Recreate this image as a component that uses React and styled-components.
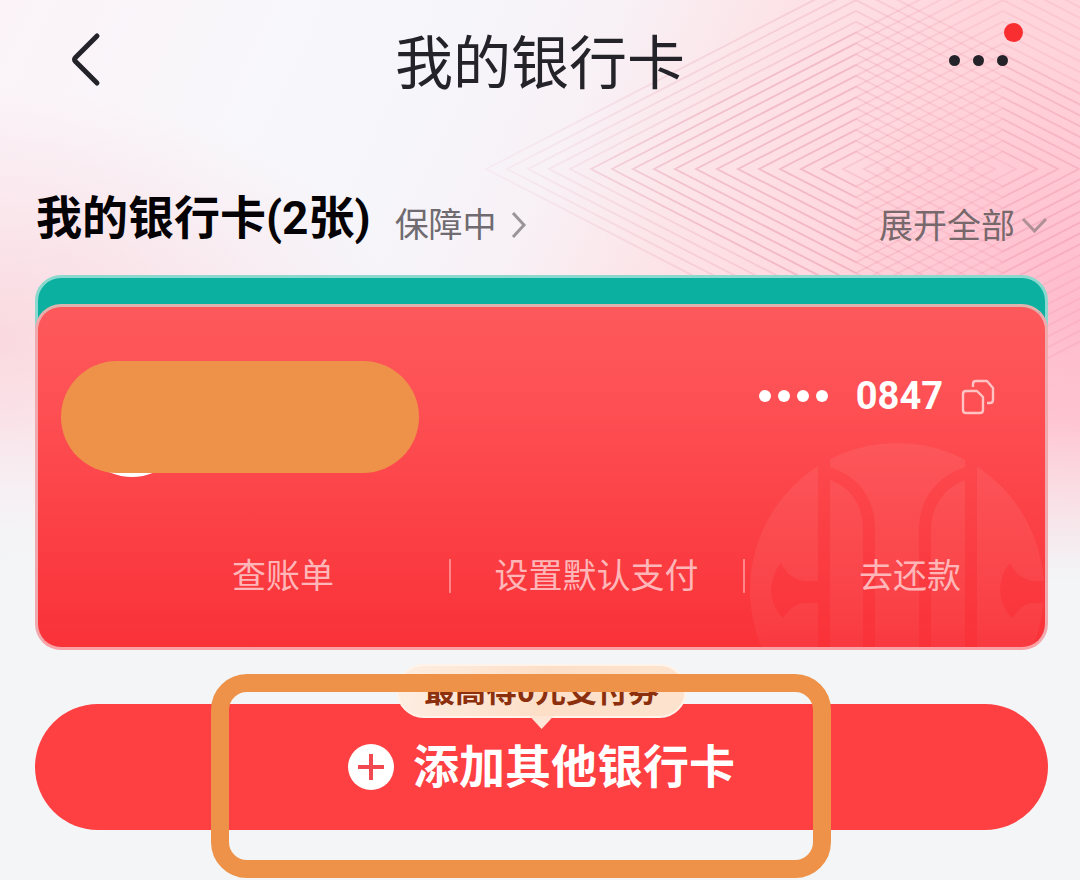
import styled, { createGlobalStyle } from 'styled-components'

const GlobalStyle = createGlobalStyle`
  * {
    box-sizing: border-box;
  }

  body {
    margin: 0;
    background: #f3f5f7;
    font-family: Roboto, 'Noto Sans CJK SC', sans-serif;
  }

  button {
    margin: 0;
    padding: 0;
    border: 0;
    background: none;
    color: inherit;
    font: inherit;
    cursor: pointer;
  }

  svg {
    display: block;
    flex-shrink: 0;
  }
`

const Page = styled.div`
  position: relative;
  min-height: 100vh;
  overflow: hidden;
  background:
    linear-gradient(180deg, rgba(243, 245, 247, 0) 420px, #f3f5f7 580px),
    radial-gradient(ellipse 400px 250px at 0 340px, rgba(250, 212, 219, 0.85), rgba(250, 212, 219, 0)),
    radial-gradient(ellipse 260px 260px at 100% 310px, rgba(255, 168, 192, 0.55), rgba(255, 168, 192, 0)),
    linear-gradient(115deg, #fbf3f8 0, #f8f7fb 20%, #f6f5fa 32%, #f8f1f6 42%, #fce4e8 52%, #ffd5dc 66%, #ffced7 100%);
`

const Backdrop = styled.svg`
  position: absolute;
  top: 0;
  right: 0;
`

const Content = styled.div`
  position: relative;
`

const Header = styled.header`
  display: grid;
  grid-template-columns: 1fr auto 1fr;
  align-items: center;
  height: 120px;
  padding: 0 66px;
`

const Title = styled.h1`
  margin: 0;
  padding-top: 8px;
  color: #25232a;
  font-size: 58px;
  font-weight: 400;
  line-height: 112px;
`

const BackButton = styled.button`
  justify-self: start;
`

const MoreButton = styled.button`
  position: relative;
  justify-self: end;
  display: flex;
  gap: 13px;
  padding: 24px 6px;
  color: #25232a;
`

const Dot = styled.span`
  width: ${({ $size }) => $size}px;
  height: ${({ $size }) => $size}px;
  border-radius: 50%;
  background: currentColor;
`

const Badge = styled.span`
  position: absolute;
  top: -8px;
  right: -9px;
  width: 19px;
  height: 19px;
  border-radius: 50%;
  background: #f92e30;
`

const Main = styled.main`
  padding: 0 32px 0 35px;
`

const SectionHead = styled.div`
  display: flex;
  align-items: center;
  height: 155px;
  padding: 40px 0 0 1px;
`

const SectionTitle = styled.h2`
  margin: 0 24px 0 0;
  color: #050305;
  font-size: 46px;
  font-weight: 700;
  line-height: 60px;
`

const SafeLink = styled.a`
  display: flex;
  align-items: center;
  gap: 14px;
  padding-top: 15px;
  color: #6f6b70;
  font-size: 34px;
  line-height: 40px;
  text-decoration: none;
`

const ExpandButton = styled.button`
  display: flex;
  align-items: center;
  gap: 6px;
  margin-left: auto;
  padding-top: 17px;
  color: #77686b;
  font-size: 34px;
  line-height: 40px;
`

const BackCard = styled.div`
  height: 64px;
  border: 3px solid #8bd8ce;
  border-radius: 26px 26px 0 0;
  background: #0cb0a0;
`

const Card = styled.article`
  position: relative;
  margin-top: -35px;
  overflow: hidden;
  border: 3px solid #f0a9ad;
  border-top-color: #dfb4ae;
  border-bottom-color: #f9a2a7;
  border-radius: 26px;
  background: linear-gradient(180deg, #fd595c, #fe5054 28%, #fb4146 62%, #f93238);
`

const Watermark = styled.svg`
  position: absolute;
  right: 0;
  bottom: 0;
`

const CardTop = styled.div`
  position: relative;
  display: flex;
  align-items: flex-start;
  justify-content: space-between;
  padding: 54px 50px 0 23px;
`

const BankName = styled.div`
  position: relative;
  width: 358px;
  height: 112px;
  border-radius: 56px;
  background: #ed9248;
`

const BankLogo = styled.span`
  position: absolute;
  left: 15px;
  bottom: -4px;
  z-index: -1;
  width: 112px;
  height: 112px;
  border-radius: 50%;
  background: #fff;
`

const BankSlot = styled.div`
  position: relative;
  z-index: 0;
`

const CardNumber = styled.div`
  display: flex;
  align-items: center;
  padding-top: 13px;
  color: #fff;
  font-size: 38px;
  font-weight: 700;
  line-height: 44px;
`

const Mask = styled.span`
  display: flex;
  gap: 7px;
  margin-right: 28px;
`

const CopyButton = styled.button`
  margin-left: 16px;
  color: #ffc3c3;
`

const Actions = styled.div`
  position: relative;
  display: flex;
  justify-content: space-between;
  padding: 86px 84px 54px 194px;
`

const Action = styled.button`
  color: #ffb6b8;
  font-size: 34px;
  line-height: 34px;
`

const MiddleAction = styled(Action)`
  padding: 0 44px;
  border: solid rgba(255, 196, 196, 0.55);
  border-width: 0 2px;
`

const AddArea = styled.section`
  position: relative;
  padding: 54px 0 49px;
`

const AddButton = styled.button`
  display: flex;
  align-items: center;
  justify-content: center;
  gap: 19px;
  width: 100%;
  height: 126px;
  border-radius: 63px;
  background: #ff4042;
  color: #fff;
  font-size: 46px;
  font-weight: 700;
  line-height: 60px;
`

const Tip = styled.div`
  position: absolute;
  top: 14px;
  left: 50%;
  transform: translateX(-50%);
  padding: 3px 26px 1px;
  border: 2px solid #fff3ea;
  border-radius: 27px;
  background: linear-gradient(100deg, #fdeee2, #fddfc8 50%, #fde3ce);
  color: #8c2f0c;
  font-size: 31px;
  font-weight: 700;
  line-height: 46px;
  white-space: nowrap;

  &::after {
    content: '';
    position: absolute;
    top: 100%;
    left: 50%;
    margin-left: -12px;
    border: solid transparent;
    border-width: 13px 12px 0;
    border-top-color: #fde6d6;
  }
`

const Highlight = styled.div`
  position: absolute;
  top: 24px;
  right: 217px;
  bottom: 1px;
  left: 176px;
  border: 18px solid #ed9248;
  border-radius: 36px;
  pointer-events: none;
`

const STEP = 21
const LEFT_RINGS = Array.from({ length: 17 }, (_, i) => 370 - i * STEP)
const RIGHT_RINGS = Array.from({ length: 19 }, (_, i) => 412 - i * STEP)

function ringPath(cx, r) {
  const h = r * 0.515
  return `M${cx - r} 169L${cx} ${169 - h}L${cx + r} 169L${cx} ${169 + h}Z`
}

function DiamondBackdrop() {
  return (
    <Backdrop width="620" height="420" viewBox="460 0 620 420" aria-hidden="true">
      <defs>
        <linearGradient id="fade" x1="0" x2="1" y1="0" y2="0">
          <stop offset="0" stopColor="#fff" stopOpacity="0.2" />
          <stop offset="0.35" stopColor="#fff" stopOpacity="0.9" />
          <stop offset="0.6" stopColor="#fff" />
          <stop offset="0.8" stopColor="#fff" stopOpacity="0.7" />
        </linearGradient>
        <mask id="fadeMask" maskUnits="userSpaceOnUse" x="460" y="0" width="620" height="420">
          <rect x="460" y="0" width="620" height="420" fill="url(#fade)" />
        </mask>
      </defs>
      <g mask="url(#fadeMask)" fill="none" stroke="#dc7088" strokeOpacity="0.18" strokeWidth="1.800">
        {LEFT_RINGS.map((r) => (
          <path key={r} d={ringPath(856, r)} />
        ))}
        {RIGHT_RINGS.map((r) => (
          <path key={r} d={ringPath(1003, r)} />
        ))}
      </g>
    </Backdrop>
  )
}

function BankWatermark() {
  return (
    <Watermark width="296" height="206" viewBox="750 441 296 206" aria-hidden="true">
      <defs>
        <linearGradient id="shine" x1="0" x2="0" y1="0" y2="1">
          <stop offset="0" stopColor="#fff" stopOpacity="0.07" />
          <stop offset="0.5" stopColor="#fff" stopOpacity="0.06" />
          <stop offset="0.7" stopColor="#fff" stopOpacity="0.04" />
        </linearGradient>
        <mask id="bars" maskUnits="userSpaceOnUse" x="750" y="441" width="296" height="206">
          <rect x="750" y="441" width="296" height="206" fill="#fff" />
          <g fill="none" stroke="#000" strokeWidth="12">
            <path d="M825 441V650M972 441V650" />
            <path d="M826 472C856 480 870 502 870 530V650" />
            <path d="M971 472C942 480 926 502 926 530V650" />
          </g>
          <path
            id="knot"
            d="M782 563C788 575 796 580 806 581H830V603H806C796 603 790 610 784 618C778 612 773 604 772 590C773 576 777 569 782 563Z"
            fill="#000"
          />
          <use href="#knot" x="229" />
        </mask>
      </defs>
      <circle cx="898" cy="590" r="147" fill="url(#shine)" mask="url(#bars)" />
    </Watermark>
  )
}

function BackIcon() {
  return (
    <svg width="40" height="58" viewBox="0 0 40 58" fill="none" stroke="#25232a" strokeWidth="5" strokeLinecap="round" strokeLinejoin="round">
      <path d="M31 5L9.500 26.500Q7.500 28.500 9.500 30.500L31 52" />
    </svg>
  )
}

function CopyIcon() {
  return (
    <svg width="36" height="38" viewBox="0 0 36 38" fill="none" stroke="currentColor" strokeWidth="2.400" strokeLinejoin="round">
      <path d="M7 14H18L24 20V33Q24 36 21 36H7Q4 36 4 33V17Q4 14 7 14Z" />
      <path d="M14 10V7Q14 4 17 4H28L34 11V23Q34 26 31 26H28" />
    </svg>
  )
}

export default function App() {
  return (
    <>
      <GlobalStyle />
      <Page>
        <DiamondBackdrop />
        <Content>
          <Header>
            <BackButton aria-label="返回">
              <BackIcon />
            </BackButton>
            <Title>我的银行卡</Title>
            <MoreButton aria-label="更多">
              <Dot $size={11} />
              <Dot $size={11} />
              <Dot $size={11} />
              <Badge />
            </MoreButton>
          </Header>

          <Main>
            <SectionHead>
              <SectionTitle>我的银行卡(2张)</SectionTitle>
              <SafeLink href="#safe">
                保障中
                <svg width="16" height="28" viewBox="0 0 16 28" fill="none" stroke="#9b949b" strokeWidth="3">
                  <path d="M2 2L13 14L2 26" />
                </svg>
              </SafeLink>
              <ExpandButton>
                展开全部
                <svg width="27" height="18" viewBox="0 0 27 18" fill="none" stroke="#b08f97" strokeWidth="3">
                  <path d="M2 2L13.500 14L25 2" />
                </svg>
              </ExpandButton>
            </SectionHead>

            <BackCard />
            <Card>
              <BankWatermark />
              <CardTop>
                <BankSlot>
                  <BankLogo />
                  <BankName />
                </BankSlot>
                <CardNumber>
                  <Mask>
                    <Dot $size={12} />
                    <Dot $size={12} />
                    <Dot $size={12} />
                    <Dot $size={12} />
                  </Mask>
                  0847
                  <CopyButton aria-label="复制卡号">
                    <CopyIcon />
                  </CopyButton>
                </CardNumber>
              </CardTop>
              <Actions>
                <Action>查账单</Action>
                <MiddleAction>设置默认支付</MiddleAction>
                <Action>去还款</Action>
              </Actions>
            </Card>

            <AddArea>
              <AddButton>
                <svg width="46" height="46" viewBox="0 0 46 46">
                  <circle cx="23" cy="23" r="23" fill="#fff" />
                  <path d="M23 10V36M10 23H36" stroke="#f04a50" strokeWidth="4" />
                </svg>
                添加其他银行卡
              </AddButton>
              <Tip>最高得0元支付券</Tip>
              <Highlight />
            </AddArea>
          </Main>
        </Content>
      </Page>
    </>
  )
}
